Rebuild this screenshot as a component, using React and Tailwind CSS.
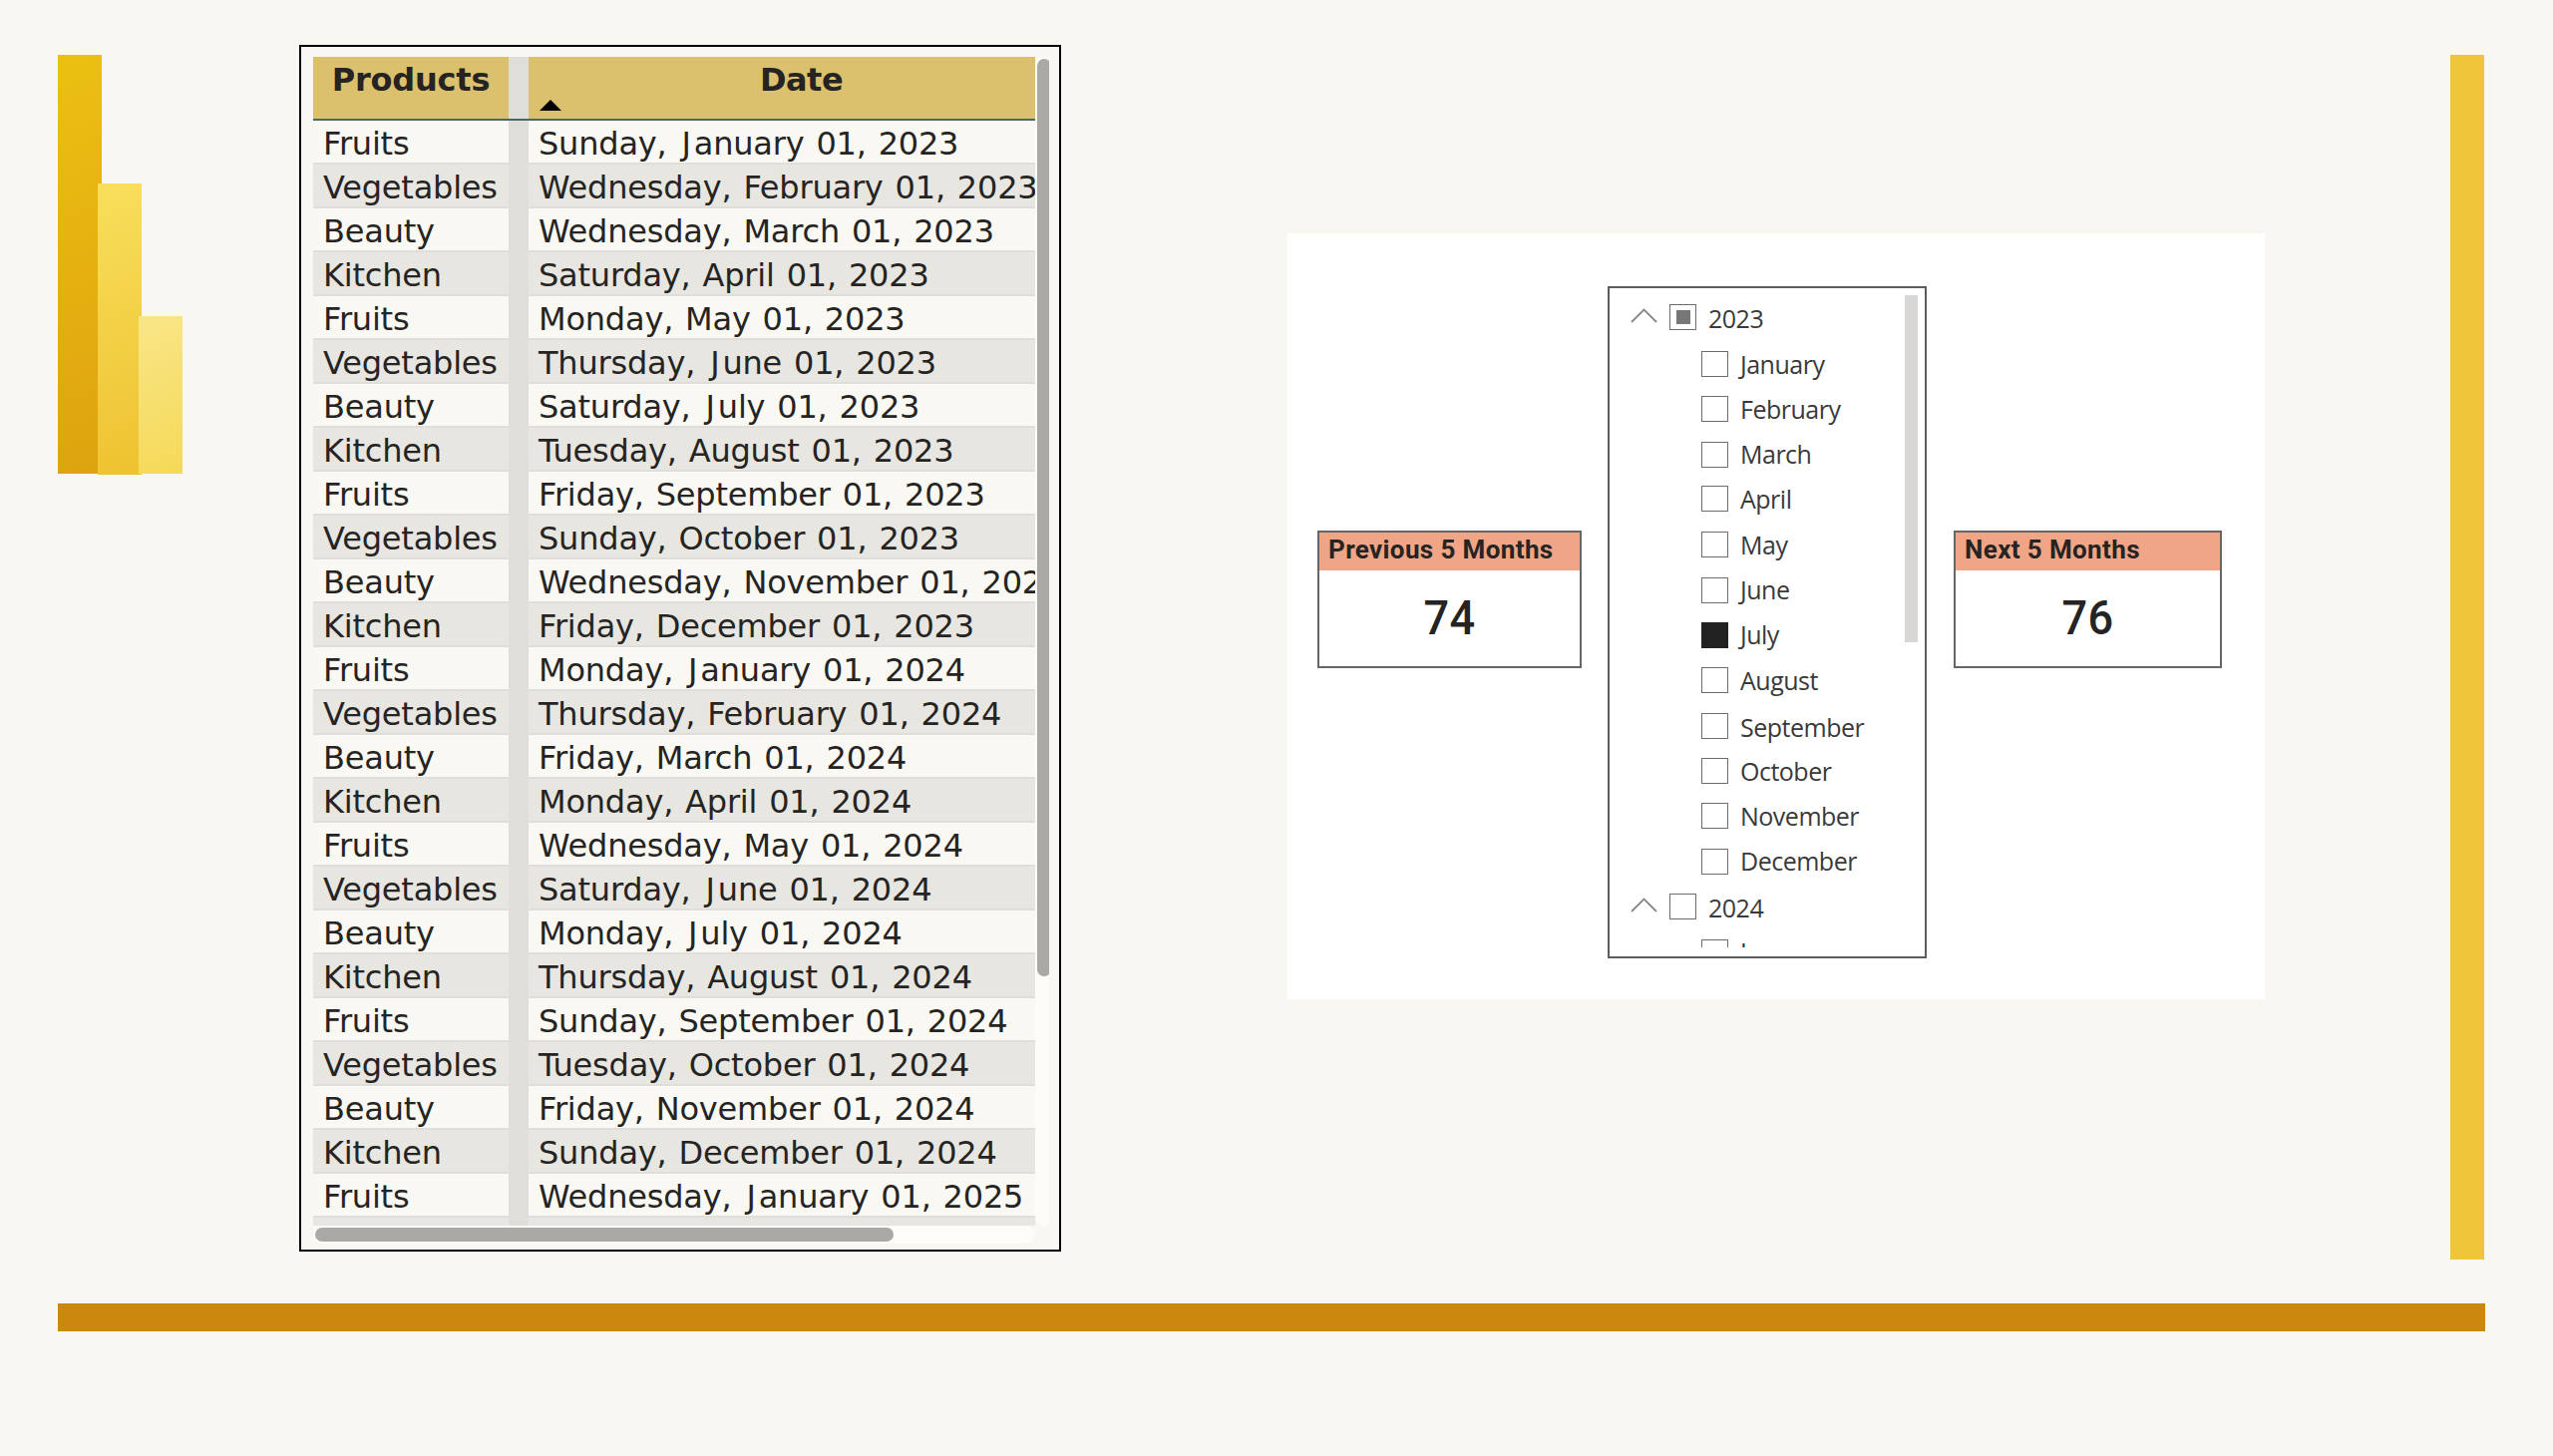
import React from "react";

const products = ["Fruits", "Vegetables", "Beauty", "Kitchen"];

const dates = [
  "Sunday, January 01, 2023",
  "Wednesday, February 01, 2023",
  "Wednesday, March 01, 2023",
  "Saturday, April 01, 2023",
  "Monday, May 01, 2023",
  "Thursday, June 01, 2023",
  "Saturday, July 01, 2023",
  "Tuesday, August 01, 2023",
  "Friday, September 01, 2023",
  "Sunday, October 01, 2023",
  "Wednesday, November 01, 2023",
  "Friday, December 01, 2023",
  "Monday, January 01, 2024",
  "Thursday, February 01, 2024",
  "Friday, March 01, 2024",
  "Monday, April 01, 2024",
  "Wednesday, May 01, 2024",
  "Saturday, June 01, 2024",
  "Monday, July 01, 2024",
  "Thursday, August 01, 2024",
  "Sunday, September 01, 2024",
  "Tuesday, October 01, 2024",
  "Friday, November 01, 2024",
  "Sunday, December 01, 2024",
  "Wednesday, January 01, 2025",
  "",
];

// height: distance to the next row; drop: extra offset of the label
const slicerRows = [
  { label: "2023", year: true, state: "partial", height: 47, drop: 2 },
  { label: "January", height: 45, drop: 0.5 },
  { label: "February", height: 45.5, drop: 0.5 },
  { label: "March", height: 44.5, drop: 0 },
  { label: "April", height: 46, drop: 0.5 },
  { label: "May", height: 45.5, drop: 0.5 },
  { label: "June", height: 45.5, drop: 0 },
  { label: "July", state: "checked", height: 45, drop: 0 },
  { label: "August", height: 46, drop: 0.5 },
  { label: "September", height: 45, drop: 1.5 },
  { label: "October", height: 45, drop: 0.5 },
  { label: "November", height: 46, drop: 0.5 },
  { label: "December", height: 45, drop: 0 },
  { label: "2024", year: true, height: 45.5, drop: 2 },
  { label: "January", height: 45, drop: 0 },
];

function LogoBars() {
  return (
    <div className="ml-[58px] mt-[55px] flex h-[421px] w-[125px] shrink-0 items-start">
      <div className="h-[420px] w-11 shrink-0 bg-linear-[160deg,#ecc013,#e4ae10_60%,#dea310]" />
      <div className="z-10 -ml-1 mt-[129px] h-[292px] w-11 shrink-0 bg-linear-[160deg,#f8df5c,#eec230]" />
      <div className="z-20 -ml-[3px] mt-[262px] h-[158px] w-11 shrink-0 bg-linear-[155deg,#f9e688,#f5d957]" />
    </div>
  );
}

function Cell({ even, children }) {
  return (
    <div
      className={
        "h-11 shrink-0 border-b-2 border-[#dfded9] pl-[10px] pt-[2px] leading-[42px] whitespace-pre " +
        (even ? "bg-[#e7e6e1]" : "bg-[#f9f8f3]")
      }
    >
      {children}
    </div>
  );
}

function DateText({ text }) {
  const at = text.indexOf("J");
  if (at < 0) return text;
  return (
    <>
      {text.slice(0, at)}
      <span className="pl-[3px] pr-[3px]">J</span>
      {text.slice(at + 1)}
    </>
  );
}

function ProductTable() {
  return (
    <div className="ml-[117px] mt-[45px] h-[1210px] w-[764px] shrink-0 border-2 border-black pl-3 pt-2.5 text-[32px] text-[#252423] [font-family:'DejaVu_Sans',Verdana,sans-serif]">
      <div className="flex">
        <div className="flex h-[1172px] w-[724px] overflow-hidden">
          <div className="flex w-[196px] shrink-0 flex-col tracking-[-0.2px]">
            <div className="h-16 shrink-0 border-b-2 border-[#48686c] bg-[#dbc06e] text-center font-bold leading-[46px] tracking-[-0.2px]">
              Products
            </div>
            {dates.map((d, i) => (
              <Cell key={i} even={i % 2 === 1}>{i < 25 ? products[i % 4] : ""}</Cell>
            ))}
          </div>
          <div className="flex w-5 shrink-0 flex-col bg-[#dfded9]">
            <div className="h-16 border-b-2 border-[#48686c]" />
          </div>
          <div className="flex w-[548px] shrink-0 flex-col tracking-[-0.2px] [word-spacing:2px]">
            <div className="relative h-16 shrink-0 border-b-2 border-[#48686c] bg-[#dbc06e] pr-px text-center font-bold leading-[46px] tracking-[-0.5px]">
              Date
              <svg className="absolute left-[11px] top-[43px]" width="22" height="11" viewBox="0 0 22 11">
                <path d="M0 11 11 0l11 11z" fill="#000" />
              </svg>
            </div>
            {dates.map((d, i) => (
              <Cell key={i} even={i % 2 === 1}>
                <DateText text={d} />
              </Cell>
            ))}
          </div>
        </div>
        <div className="h-[1172px] w-3.5 overflow-hidden">
          <div className="h-full w-[18px] rounded-full bg-[#fdfcf8] px-0.5 pt-0.5">
            <div className="h-[920px] w-3.5 rounded-full bg-[#aaa9a5]" />
          </div>
        </div>
      </div>
      <div className="h-[18px] w-[724px] rounded-full bg-[#fdfcf8] p-0.5">
        <div className="h-3.5 w-[580px] rounded-full bg-[#aaa9a5]" />
      </div>
    </div>
  );
}

function Card({ title, value }) {
  return (
    <div className="flex h-full w-full flex-col border-2 border-[#666] bg-white text-[#252423] [font-family:Roboto,sans-serif]">
      <div className="h-[38px] shrink-0 bg-[#f0a686] pl-[9px] text-[26px] font-bold leading-[34px] tracking-[0.38px] whitespace-nowrap">
        {title}
      </div>
      <div className="scale-x-[0.92] text-center text-[49px] font-medium leading-[96px] tracking-[0.5px]">{value}</div>
    </div>
  );
}

function Checkbox({ state }) {
  if (state === "checked") return <div className="h-[26px] w-[27px] shrink-0 bg-[#212121]" />;
  return (
    <div className="flex h-[26px] w-[27px] shrink-0 items-center justify-center border border-[#6c6c6c] bg-white">
      {state === "partial" && <div className="h-[14px] w-[14px] bg-[#777]" />}
    </div>
  );
}

function Slicer() {
  return (
    <div className="-ml-px flex h-[674px] w-[320px] border-2 border-[#5c5c5c] bg-white pt-[7px] text-[25px] text-[#3a3a3a] [font-family:'Open_Sans','Noto_Sans',sans-serif]">
      <div className="h-[654px] w-[296px] shrink-0 overflow-hidden pl-px pt-[9px]">
        {slicerRows.map((r, i) => (
          <div
            key={i}
            className={r.year ? "flex items-start pl-5" : "flex items-start pl-[91px]"}
            style={{ height: r.height }}
          >
            {r.year && (
              <svg className="mr-3 mt-1 shrink-0" width="27" height="15" viewBox="0 0 27 15" fill="none" stroke="#888" strokeWidth="1.8">
                <path d="M1 14 13.5 1.5 26 14" />
              </svg>
            )}
            <Checkbox state={r.state} />
            <div className="pl-3 leading-[25px] tracking-[-0.5px]" style={{ paddingTop: r.drop }}>{r.label}</div>
          </div>
        ))}
      </div>
      <div className="h-[348px] w-[13px] shrink-0 bg-[#d8d7d5]" />
    </div>
  );
}

export default function App() {
  return (
    <div className="flex h-[1460px] w-[2560px] flex-col overflow-hidden bg-[#f8f7f2]">
      <div className="flex h-[1307px] shrink-0 items-start">
        <LogoBars />
        <ProductTable />
        <div className="ml-[227px] mt-[234px] flex h-[768px] w-[980px] shrink-0 items-start bg-white">
          <div className="ml-[30px] mt-[298px] h-[138px] w-[265px] shrink-0">
            <Card title="Previous 5 Months" value="74" />
          </div>
          <div className="ml-[27px] mt-[53px] shrink-0">
            <Slicer />
          </div>
          <div className="ml-[27px] mt-[298px] h-[138px] w-[269px] shrink-0">
            <Card title="Next 5 Months" value="76" />
          </div>
        </div>
        <div className="ml-[186px] mt-[55px] h-[1208px] w-[34px] shrink-0 bg-[#efc638]" />
      </div>
      <div className="ml-[58px] h-7 w-[2434px] shrink-0 bg-[#cc870e]" />
    </div>
  );
}
